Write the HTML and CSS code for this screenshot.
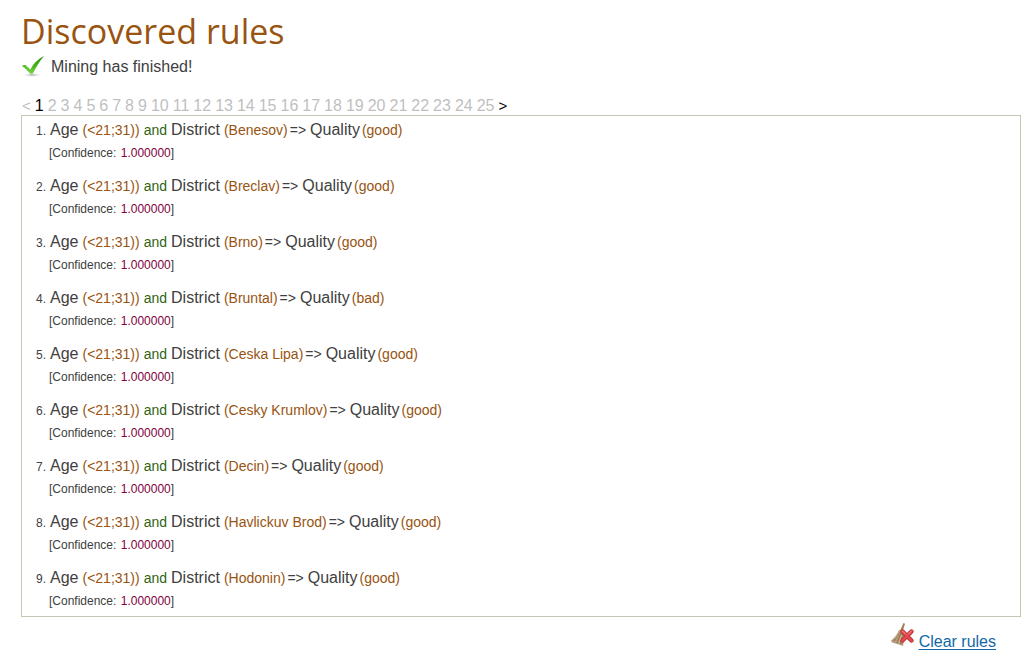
FILE: index.html
```html
<!DOCTYPE html>
<html lang="en">
<head>
<meta charset="utf-8">
<title>Discovered rules</title>
<link rel="stylesheet" href="styles.css">
</head>
<body>
<main class="page">
  <h1 class="title">Discovered rules</h1>
  <p class="status">
    <svg class="status-icon" viewBox="0 0 24 24" aria-hidden="true">
      <defs>
        <linearGradient id="tick" x1="0" y1="0" x2="0" y2="1"><stop offset="0" stop-color="#2f9410"/><stop offset=".55" stop-color="#45b414"/><stop offset="1" stop-color="#7ed84b"/></linearGradient>
        <radialGradient id="shade"><stop offset="0" stop-color="#999"/><stop offset="1" stop-color="#fff" stop-opacity="0"/></radialGradient>
      </defs>
      <ellipse cx="11" cy="20" rx="10" ry="2" fill="url(#shade)"/>
      <path d="M1 11C3 9.500 5 9.800 6 11.500L9.500 14.500C12 9 17 4 23 1C18 7 14.500 13 12 18.500Q10 19.500 8.500 18C6.500 15.500 4 13 1 11Z" fill="url(#tick)"/>
      <path d="M3.500 11.200Q5 11 6 12.500L9.500 15.800" fill="none" stroke="#8ad65f" stroke-width=".7"/>
    </svg>
    <span>Mining has finished!</span>
  </p>
  <nav class="pager" id="pager" aria-label="Pages"></nav>
  <ol class="rules" id="rules"></ol>
  <div class="actions">
    <svg class="clear-icon" viewBox="0 0 24 24" aria-hidden="true">
      <path d="M12.500 0L14 .8L11.500 9L8.800 8Z" fill="#a58058"/>
      <path d="M8 7L12 8.500L13.500 14L12 23L8 21.500L1 19.500L0 17.500Q5 14 8 7Z" fill="#b69b7b"/>
      <path d="M8.500 9L3 18M10 9.500L6 20M11.500 10L9.500 21" stroke="#8d6c4a" stroke-width=".9"/>
      <path d="M8.200 8.500L4 15.500M10.800 12L8 20" stroke="#dac7a8" stroke-width=".7"/>
      <path d="M11.500 8.500L20.500 17.500M20.500 8.500L11.500 17.500" stroke="#b92b30" stroke-width="4.400" stroke-linecap="round"/>
      <path d="M11.500 8.500L20.500 17.500M20.500 8.500L11.500 17.500" stroke="#e04a4d" stroke-width="2.800" stroke-linecap="round"/>
      <path d="M11.500 8L14.500 11M20.500 8L17.500 11" stroke="#f39a98" stroke-width=".9" stroke-linecap="round"/>
    </svg>
    <a class="clear-link" href="#clear">Clear rules</a>
  </div>
</main>
<script src="script.js"></script>
</body>
</html>
```
FILE: styles.css
```css
body {
  margin: 0;
  background: #fff;
  color: #404040;
  font: 16px/24px "Liberation Sans", Arial, sans-serif;
}
.page { padding: 8px 6px 0 21px; }
.title {
  margin: 0;
  color: #985410;
  font: 400 34px/46px "Open Sans", sans-serif;
}
.status {
  display: flex;
  align-items: center;
  gap: 6px;
  margin: 0;
  padding: 1px 0 18px;
}
.status-icon { width: 24px; height: 24px; }
.pager {
  display: flex;
  gap: 4px;
  padding-left: 1px;
  line-height: 18px;
}
.pager a {
  color: #bfbfbf;
  text-decoration: none;
}
.pager .arrow { font-size: 15px; }
.pager .current, .pager .next { color: #000; }
.rules {
  margin: 0;
  padding: 0 14px;
  border: 1px solid #c6c6b8;
  list-style: none;
  counter-reset: rule;
}
.rule {
  counter-increment: rule;
  padding: 3px 0 8px;
}
.rule:last-child { padding-bottom: 4px; }
.rule-text {
  display: flex;
  align-items: baseline;
  line-height: 22px;
}
.rule-text::before {
  content: counter(rule) ".";
  width: 14px;
  font-size: 12px;
}
.value {
  margin-left: 4px;
  color: #985410;
  font-size: 14px;
}
.value:last-child { margin-left: 2px; }
.and {
  margin: 0 4px;
  color: #2f6610;
  font-size: 14px;
}
.implies { margin: 0 4px 0 2px; font-size: 14px; }
.confidence {
  padding-left: 13px;
  font-size: 12px;
  line-height: 22px;
}
.confidence strong {
  margin-left: 1px;
  color: #800040;
  font-weight: 400;
}
.actions {
  display: flex;
  justify-content: flex-end;
  gap: 4px;
  padding: 6px 25px 0 0;
}
.clear-icon { width: 24px; height: 24px; }
.clear-link {
  padding-top: 7px;
  color: #1168a6;
  text-decoration: underline 1px;
  text-underline-offset: 2px;
}
```
FILE: script.js
```js
const pages = Array.from({ length: 25 }, (_, i) =>
  `<a href="#page-${i + 1}"${i === 0 ? ' class="current" aria-current="page"' : ''}>${i + 1}</a>`);
document.getElementById('pager').innerHTML =
  '<a class="arrow" href="#prev">&lt;</a>' + pages.join('') + '<a class="arrow next" href="#next">&gt;</a>';

const rules = [
  ['Benesov', 'good'], ['Breclav', 'good'], ['Brno', 'good'],
  ['Bruntal', 'bad'], ['Ceska Lipa', 'good'], ['Cesky Krumlov', 'good'],
  ['Decin', 'good'], ['Havlickuv Brod', 'good'], ['Hodonin', 'good'],
];
document.getElementById('rules').innerHTML = rules.map(([district, quality]) => `
  <li class="rule">
    <div class="rule-text"><span>Age</span><span class="value">(&lt;21;31))</span><span class="and">and</span><span>District</span><span class="value">(${district})</span><span class="implies">=&gt;</span><span>Quality</span><span class="value">(${quality})</span></div>
    <div class="confidence">[Confidence: <strong>1.000000</strong>]</div>
  </li>`).join('');
```
